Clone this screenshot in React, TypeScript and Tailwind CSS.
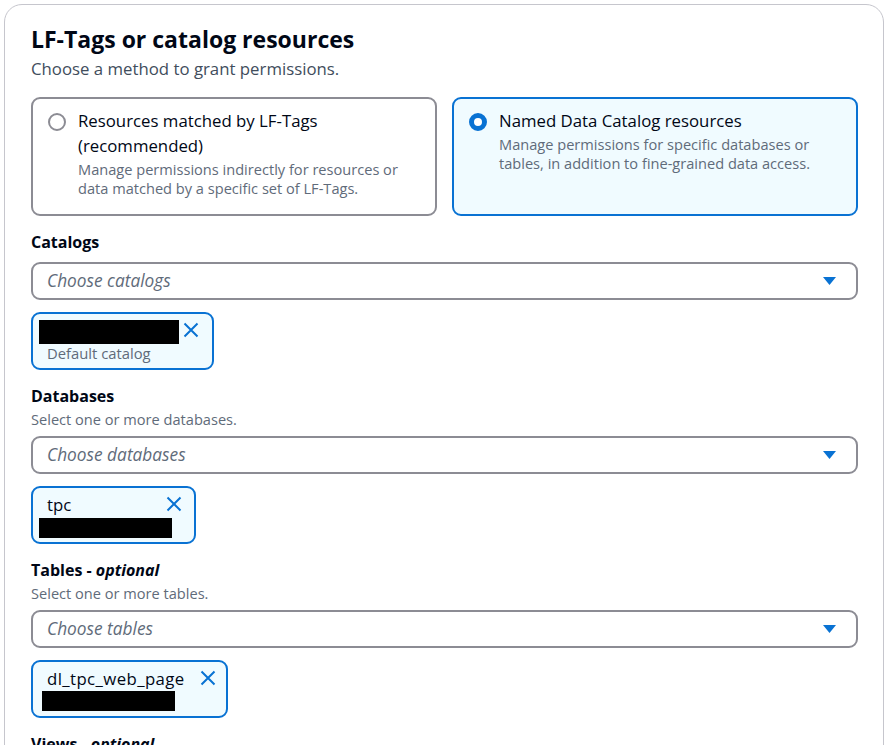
import React from 'react';

const BLUE = '#0972d3';

const CloseIcon: React.FC<{ className?: string }> = ({ className }) => (
  <svg className={className} width="16" height="16" viewBox="0 0 16 16" fill="none">
    <path d="M1.5 1.5 L14.5 14.5 M14.5 1.5 L1.5 14.5" stroke={BLUE} strokeWidth="2" />
  </svg>
);

const Caret = () => (
  <svg width="13" height="8" viewBox="0 0 13 8">
    <polygon points="0,0 13,0 6.5,8" fill={BLUE} />
  </svg>
);

const Select: React.FC<{ placeholder: string }> = ({ placeholder }) => (
  <div className="mt-[7px] flex h-[38px] items-center justify-between rounded-[9px] border-2 border-[#8c8c94] bg-white pl-[14px] pr-[20px]">
    <span className="text-[17.3px] italic leading-[22px] text-[#5f6b7a]">{placeholder}</span>
    <Caret />
  </div>
);

const Radio: React.FC<{ checked?: boolean }> = ({ checked }) =>
  checked ? (
    <div className="mt-[5px] h-[18px] w-[18px] shrink-0 rounded-full border-[5px] border-[#0972d3] bg-white" />
  ) : (
    <div className="mt-[5px] h-[18px] w-[18px] shrink-0 rounded-full border-2 border-[#8c8c94] bg-white" />
  );

const App: React.FC = () => {
  return (
    <div className="min-h-screen bg-white font-['Open_Sans','Noto_Sans',sans-serif] text-[#000716]">
      <div className="ml-[4px] mt-[4px] w-[880px] rounded-[18px] border border-[#c6c6cd] pb-[24px] pl-[26px] pr-[25px] pt-[20px]">
        {/* Header */}
        <h2 className="text-[23px] font-bold leading-[28px]">LF-Tags or catalog resources</h2>
        <p className="mt-[5px] text-[16.8px] leading-[22px] text-[#414d5c]">Choose a method to grant permissions.</p>

        {/* Method tiles */}
        <div className="mt-[17px] grid grid-cols-2 gap-[15px]">
          <div className="flex gap-[12px] rounded-[9px] border-2 border-[#8c8c94] bg-white pb-[16px] pl-[15px] pr-[16px] pt-[9px]">
            <Radio />
            <div>
              <div className="text-[16.8px] leading-[25px]">Resources matched by LF-Tags (recommended)</div>
              <div className="mt-[2px] text-[14.6px] leading-[19px] text-[#5f6b7a]">
                Manage permissions indirectly for resources or data matched by a specific set of LF-Tags.
              </div>
            </div>
          </div>
          <div className="flex gap-[12px] rounded-[9px] border-2 border-[#0972d3] bg-[#f0fbff] pb-[16px] pl-[15px] pr-[16px] pt-[9px]">
            <Radio checked />
            <div>
              <div className="text-[16.8px] leading-[25px]">Named Data Catalog resources</div>
              <div className="mt-[2px] text-[14.6px] leading-[19px] text-[#5f6b7a]">
                Manage permissions for specific databases or tables, in addition to fine-grained data access.
              </div>
            </div>
          </div>
        </div>

        {/* Catalogs */}
        <div className="mt-[14px] text-[16px] font-bold leading-[25px]">Catalogs</div>
        <Select placeholder="Choose catalogs" />
        <div className="mt-[12px] w-[183px] rounded-[9px] border-2 border-[#0972d3] bg-[#f0fbff] pb-[5px] pl-[6px] pr-[13px] pt-[6px]">
          <div className="flex items-start">
            <div className="h-[24px] w-[140px] bg-black" />
            <CloseIcon className="ml-[4px] mt-[2px]" />
          </div>
          <div className="pl-[8px] text-[14.8px] leading-[19px] text-[#5f6b7a]">Default catalog</div>
        </div>

        {/* Databases */}
        <div className="mt-[14px] text-[16px] font-bold leading-[25px]">Databases</div>
        <div className="text-[14.6px] leading-[20px] text-[#5f6b7a]">Select one or more databases.</div>
        <Select placeholder="Choose databases" />
        <div className="mt-[12px] w-[165px] rounded-[9px] border-2 border-[#0972d3] bg-[#f0fbff] pb-[4px] pr-[12px] pt-[4px]">
          <div className="flex items-start justify-between pl-[14px]">
            <span className="text-[16.8px] leading-[25px]">tpc</span>
            <CloseIcon className="mt-[4px]" />
          </div>
          <div className="ml-[6px] mt-[1px] h-[20px] w-[133px] bg-black" />
        </div>

        {/* Tables */}
        <div className="mt-[14px] text-[16px] font-bold leading-[25px]">
          Tables - <i>optional</i>
        </div>
        <div className="text-[14.6px] leading-[20px] text-[#5f6b7a]">Select one or more tables.</div>
        <Select placeholder="Choose tables" />
        <div className="mt-[12px] w-[197px] rounded-[9px] border-2 border-[#0972d3] bg-[#f0fbff] pb-[5px] pr-[10px] pt-[4px]">
          <div className="flex items-start justify-between pl-[14px]">
            <span className="text-[16.8px] leading-[25px] tracking-[0.4px]">dl_tpc_web_page</span>
            <CloseIcon className="mt-[4px]" />
          </div>
          <div className="ml-[9px] h-[20px] w-[133px] bg-black" />
        </div>

        {/* Views */}
        <div className="mt-[14px] text-[16px] font-bold leading-[25px]">
          Views - <i>optional</i>
        </div>
        <div className="text-[14.6px] leading-[20px] text-[#5f6b7a]">Select one or more views.</div>
        <Select placeholder="Choose views" />
      </div>
    </div>
  );
};

export default App;
